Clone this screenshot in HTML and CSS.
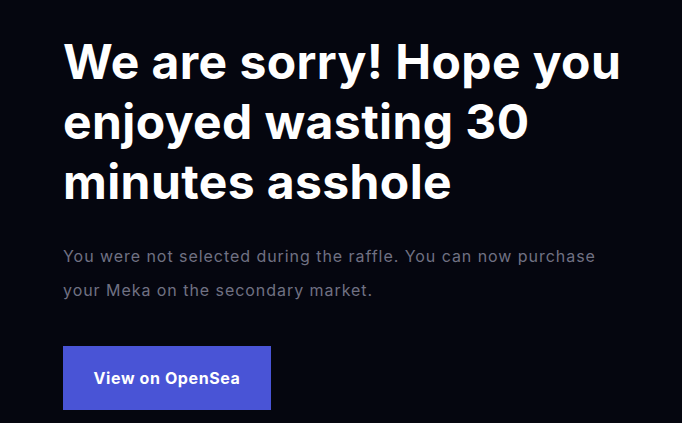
FILE: index.html
```html
<!DOCTYPE html>
<html lang="en">
<head>
    <meta charset="UTF-8">
    <meta name="viewport" content="width=device-width, initial-scale=1.0">
    <title>Raffle Results</title>
    <link rel="stylesheet" href="styles.css">
</head>
<body>
    <div class="container">
        <h1>We are sorry! Hope you enjoyed wasting 30 minutes asshole</h1>
        <p class="info">You were not selected during the raffle. You can now purchase your Meka on the secondary market.</p>
        <a class="btn" href="#">View on OpenSea</a>
    </div>
</body>
</html>
```
FILE: styles.css
```css
body {
    font-family: Inter, "Liberation Sans", sans-serif;
    background-color: #05060f;
    color: #fff;
    margin: 0;
}
.container {
    padding: 32px 63px 0;
}
h1 {
    font-size: 48px;
    font-weight: 700;
    line-height: 60px;
    letter-spacing: 0.4px;
    margin: 0 0 27px;
    width: 580px;
}
.info {
    font-size: 16px;
    line-height: 34px;
    letter-spacing: 0.95px;
    color: #707183;
    margin: 0 0 39px;
    max-width: 560px;
}
.btn {
    display: inline-block;
    background-color: #4954d6;
    color: #fff;
    font-weight: 700;
    font-size: 16px;
    letter-spacing: 0.6px;
    text-decoration: none;
    padding: 22px 0;
    width: 208px;
    text-align: center;
}
```
